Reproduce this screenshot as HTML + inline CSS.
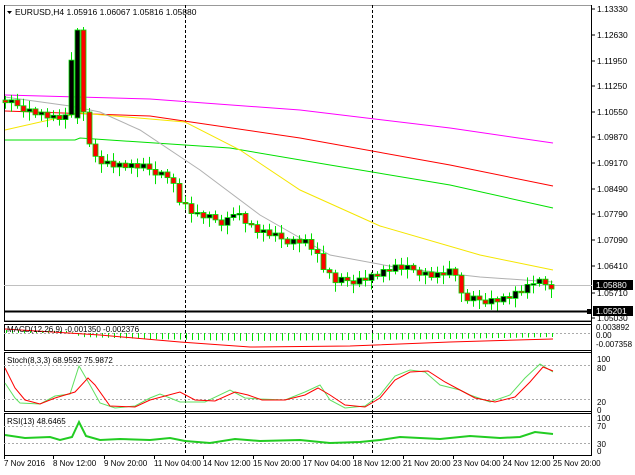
<!DOCTYPE html>
<html><head><meta charset="utf-8"><style>
html,body{margin:0;padding:0;background:#fff;width:635px;height:475px;overflow:hidden}
svg{display:block;font-family:"Liberation Sans",sans-serif}
</style></head><body>
<svg id="s" width="635" height="475" xmlns="http://www.w3.org/2000/svg">
<rect width="635" height="475" fill="#fff"/>
</svg>
<script>
(function(){
var s=document.getElementById('s'),NS='http://www.w3.org/2000/svg';
function el(t,a,txt){var e=document.createElementNS(NS,t);for(var k in a)e.setAttribute(k,a[k]);if(txt!==undefined)e.textContent=txt;s.appendChild(e);return e;}
function interp(pts,x){for(var i=0;i<pts.length-1;i++){if(x>=pts[i][0]&&x<=pts[i+1][0]){var t=(x-pts[i][0])/(pts[i+1][0]-pts[i][0]);return pts[i][1]+t*(pts[i+1][1]-pts[i][1]);}}return pts[pts.length-1][1];}
function poly(pts,c,w){var d=pts.map(function(p){return p[0]+','+p[1]}).join(' ');el('polyline',{points:d,fill:'none',stroke:c,'stroke-width':w||1});}
var L=4,R=592;
function panel(y1,y2){el('rect',{x:L+0.5,y:y1+0.5,width:R-L-1,height:y2-y1,fill:'none',stroke:'#000','stroke-width':1});}
el('rect',{x:L+0.5,y:5.5,width:R-L-1,height:315,fill:'none',stroke:'#999'});
el('line',{x1:L+0.5,y1:5,x2:L+0.5,y2:321,stroke:'#000'});
el('line',{x1:R-0.5,y1:5,x2:R-0.5,y2:456,stroke:'#000'});
el('line',{x1:L,y1:321.5,x2:R,y2:321.5,stroke:'#000'});
panel(324,350);panel(352,411);panel(413,455);
[185,372].forEach(function(x){el('line',{x1:x+0.5,y1:5,x2:x+0.5,y2:456,stroke:'#000','stroke-dasharray':'3,2'});});
var pl=[['1.13330',9],['1.12630',35],['1.11950',61],['1.11250',86],['1.10550',112],['1.09870',137],['1.09170',163],['1.08490',189],['1.07790',214],['1.07090',240],['1.06410',266],['1.05710',293],['1.05030',318]];
pl.forEach(function(p){el('line',{x1:R,y1:p[1],x2:R+3,y2:p[1],stroke:'#000'});el('text',{x:597,y:p[1]+3,'font-size':'8.5',fill:'#000'},p[0]);});
el('line',{x1:L,y1:285.5,x2:R,y2:285.5,stroke:'#c0c0c0'});
poly([[5,95],[150,99],[300,110],[450,128],[553,143]],'#ff00ff',1);
poly([[5,111],[150,116],[300,138],[450,165],[553,186]],'#ff0000',1);
poly([[5,140],[75,140],[80,138],[230,148],[330,165],[450,185],[553,208]],'#00e000',1);
poly([[5,130],[80,113],[185,122],[240,150],[300,190],[380,226],[480,255],[553,270]],'#f5e600',1);
poly([[5,97],[70,106],[100,112],[140,130],[200,170],[260,215],[330,255],[400,268],[480,277],[553,282]],'#b0b0b0',1);
var cp=[[5,100],[30,108],[60,118],[73,118],[79,30],[85,112],[92,125],[98,155],[105,160],[120,165],[150,168],[175,175],[185,200],[200,215],[230,222],[240,210],[260,230],[290,240],[310,240],[320,250],[330,270],[340,282],[360,280],[380,275],[400,268],[420,270],[440,275],[460,270],[468,300],[490,300],[510,298],[530,290],[540,282],[553,285]];
var prev=interp(cp,5);
for(var x=5;x<=553;x+=6){var c=interp(cp,x+6)+((x*7919)%11-5)*0.8;var o=prev;if(x==77){o=118;c=30;}if(x==83){o=30;c=112;}
var hi=Math.min(o,c)-2-((x*13)%7),lo=Math.max(o,c)+2+((x*17)%9);
el('line',{x1:x+0.5,y1:hi,x2:x+0.5,y2:lo,stroke:'#00e000'});
var by=Math.min(o,c),bh=Math.max(Math.abs(c-o),1.5);
el('rect',{x:x-2,y:by,width:5,height:bh,fill:c<o?'#000':'#ff0000',stroke:'#00e000','stroke-width':0.8});
prev=c;}
el('line',{x1:L,y1:311.5,x2:R,y2:311.5,stroke:'#000','stroke-width':2});
el('rect',{x:587,y:309,width:5,height:5,fill:'#000'});
el('rect',{x:593,y:280,width:40,height:10,fill:'#000'});el('text',{x:596,y:288,'font-size':'8.5',fill:'#fff'},'1.05880');
el('rect',{x:593,y:306,width:40,height:10,fill:'#000'});el('text',{x:596,y:314,'font-size':'8.5',fill:'#fff'},'1.05201');
el('path',{d:'M7,11 L12,11 L9.5,14 Z',fill:'#000'});
el('text',{x:15,y:15,'font-size':'8.5',fill:'#000'},'EURUSD,H4  1.05916 1.06067 1.05816 1.05880');
el('line',{x1:L,y1:333.5,x2:R,y2:333.5,stroke:'#aaa','stroke-dasharray':'2,2'});
for(var x2=6;x2<=553;x2+=6){var h=interp([[5,-3],[70,-2],[80,4],[150,6],[250,8],[350,7],[450,6],[553,4]],x2);el('line',{x1:x2+0.5,y1:333,x2:x2+0.5,y2:333+h,stroke:'#00e000'});}
poly([[5,329],[100,335],[180,342],[250,347],[350,346],[450,342],[553,339]],'#ff0000',1);
el('text',{x:7,y:332,'font-size':'8',fill:'#000'},'MACD(12,26,9) -0.001350 -0.002376');
el('text',{x:596,y:330,'font-size':'8',fill:'#000'},'0.003892');
el('text',{x:596,y:338,'font-size':'8',fill:'#000'},'0.00');
el('text',{x:596,y:347,'font-size':'8',fill:'#000'},'-0.007358');
[365.5,399.5].forEach(function(y){el('line',{x1:L,y1:y,x2:R,y2:y,stroke:'#aaa','stroke-dasharray':'2,2'});});
el('text',{x:7,y:363,'font-size':'8',fill:'#000'},'Stoch(8,3,3) 68.9592 75.9872');
[['100',359],['80',368],['20',402],['0',410]].forEach(function(p){el('text',{x:597,y:p[1]+3,'font-size':'8',fill:'#000'},p[0]);});
poly([[5,383],[15,398],[20,403],[40,404],[55,396],[70,394],[79,366],[90,385],[100,403],[115,408],[135,406],[150,398],[160,394],[170,398],[180,402],[205,402],[230,390],[245,398],[260,399],[285,400],[305,392],[320,385],[330,400],[345,408],[365,406],[380,395],[395,376],[410,370],[425,372],[440,385],[460,390],[470,395],[490,402],[510,395],[525,378],[540,364],[553,372]],'#60e060',1);
poly([[5,368],[15,388],[25,400],[40,404],[55,398],[75,392],[88,378],[95,385],[110,406],[135,407],[150,400],[165,396],[180,392],[195,400],[215,401],[235,392],[248,395],[262,400],[285,400],[305,395],[318,388],[330,395],[345,405],[365,407],[380,398],[395,380],[410,372],[428,371],[445,382],[460,390],[475,398],[495,402],[515,397],[530,382],[543,367],[553,371]],'#ff0000',1);
[426.5,443.5].forEach(function(y){el('line',{x1:L,y1:y,x2:R,y2:y,stroke:'#aaa','stroke-dasharray':'2,2'});});
el('text',{x:7,y:424,'font-size':'8',fill:'#000'},'RSI(13) 48.6465');
[['100',418],['70',426],['30',444],['0',451]].forEach(function(p){el('text',{x:597,y:p[1]+3,'font-size':'8',fill:'#000'},p[0]);});
poly([[5,435],[25,438],[50,437],[60,440],[72,437],[79,422],[86,436],[100,440],[120,439],[150,440],[170,438],[185,441],[210,443],[235,439],[260,441],[300,440],[330,443],[360,442],[380,440],[400,437],[440,439],[470,436],[500,438],[520,437],[535,432],[553,434]],'#22cc22',2);
var tl=[['7 Nov 2016',4],['8 Nov 12:00',53],['9 Nov 20:00',104],['11 Nov 04:00',154],['14 Nov 12:00',203],['15 Nov 20:00',253],['17 Nov 04:00',303],['18 Nov 12:00',353],['21 Nov 20:00',403],['23 Nov 04:00',453],['24 Nov 12:00',503],['25 Nov 20:00',553]];
tl.forEach(function(t){el('line',{x1:t[1]+0.5,y1:456,x2:t[1]+0.5,y2:459,stroke:'#000'});el('text',{x:t[1],y:466,'font-size':'8',fill:'#000'},t[0]);});
})();
</script>
</body></html>
